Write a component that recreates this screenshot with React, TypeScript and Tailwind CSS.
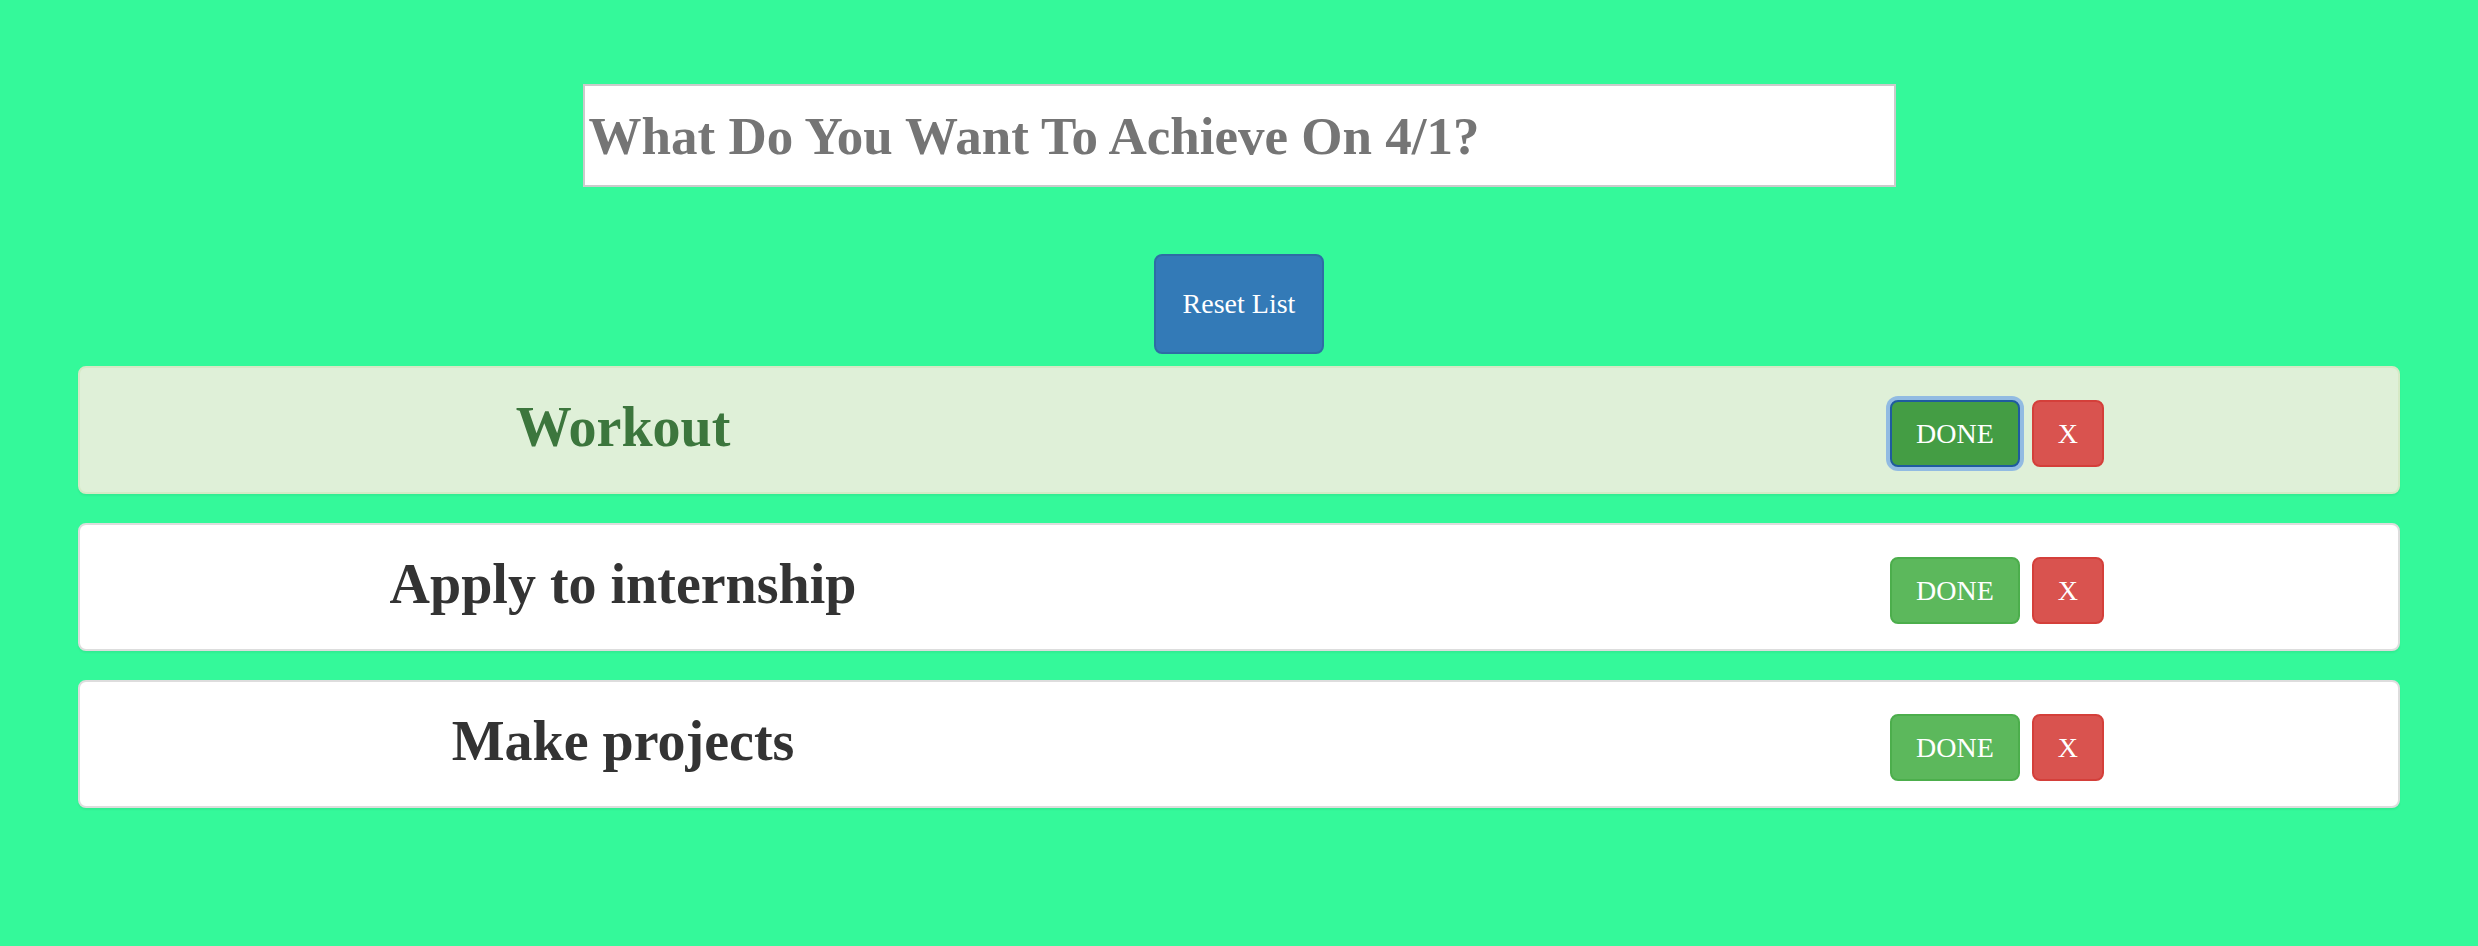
import { useState } from "react";

type Todo = { id: number; text: string; done: boolean };

const initial: Todo[] = [
  { id: 1, text: "Workout", done: true },
  { id: 2, text: "Apply to internship", done: false },
  { id: 3, text: "Make projects", done: false },
];

function TodoRow({
  todo,
  focused,
  onDone,
  onRemove,
}: {
  todo: Todo;
  focused: boolean;
  onDone: VoidFunction;
  onRemove: VoidFunction;
}) {
  return (
    <div
      className={
        todo.done
          ? "flex items-center h-[128px] rounded-[8px] border-2 border-[#d6e9c6] bg-[#dff0d8] shadow-[0_2px_2px_rgba(0,0,0,0.05)]"
          : "flex items-center h-[128px] rounded-[8px] border-2 border-[#dddddd] bg-white shadow-[0_2px_2px_rgba(0,0,0,0.05)]"
      }
    >
      <h2
        className={
          todo.done
            ? "w-[1086px] pb-[5px] text-center text-[56px] leading-[1.1] font-bold text-[#3c763d]"
            : "w-[1086px] pb-[5px] text-center text-[56px] leading-[1.1] font-bold text-[#333333]"
        }
      >
        {todo.text}
      </h2>
      <div className="ml-[724px] mt-[6px] flex gap-[12px]">
        <button
          onClick={onDone}
          className={
            focused
              ? "px-[24px] py-[12px] text-[28px] leading-[39px] text-white rounded-[8px] border-2 border-[#1f5b9e] bg-[#449d44] shadow-[0_0_0_4px_rgba(120,170,230,0.75)]"
              : "px-[24px] py-[12px] text-[28px] leading-[39px] text-white rounded-[8px] border-2 border-[#4cae4c] bg-[#5cb85c]"
          }
        >
          DONE
        </button>
        <button
          onClick={onRemove}
          className="px-[24px] py-[12px] text-[28px] leading-[39px] text-white rounded-[8px] border-2 border-[#d43f3a] bg-[#d9534f]"
        >
          X
        </button>
      </div>
    </div>
  );
}

export default function App() {
  const [todos, setTodos] = useState<Todo[]>(initial);
  const [value, setValue] = useState("");

  const toggle = (id: number) =>
    setTodos(todos.map((t) => (t.id === id ? { ...t, done: !t.done } : t)));
  const remove = (id: number) => setTodos(todos.filter((t) => t.id !== id));

  return (
    <div
      className="min-h-screen bg-[#34f99a] pt-[84px] px-[78px]"
      style={{ fontFamily: '"Liberation Serif", "Times New Roman", serif' }}
    >
      <input
        value={value}
        onChange={(e) => setValue(e.target.value)}
        placeholder="What Do You Want To Achieve On 4/1?"
        className="block mx-auto w-[1313px] h-[103px] border-2 border-[#cbcbcb] bg-white px-[4px] text-[53px] font-bold text-[#333] placeholder:text-[#757575] outline-none"
      />
      <div className="flex justify-center mt-[67px]">
        <button
          onClick={() => setTodos(initial)}
          className="px-[27px] py-[28px] text-[28px] leading-[40px] text-white rounded-[8px] border-2 border-[#2e6da4] bg-[#337ab7]"
        >
          Reset List
        </button>
      </div>
      <div className="mt-[12px] flex flex-col gap-[29px]">
        {todos.map((t) => (
          <TodoRow
            key={t.id}
            todo={t}
            focused={t.id === 1}
            onDone={() => toggle(t.id)}
            onRemove={() => remove(t.id)}
          />
        ))}
      </div>
    </div>
  );
}
